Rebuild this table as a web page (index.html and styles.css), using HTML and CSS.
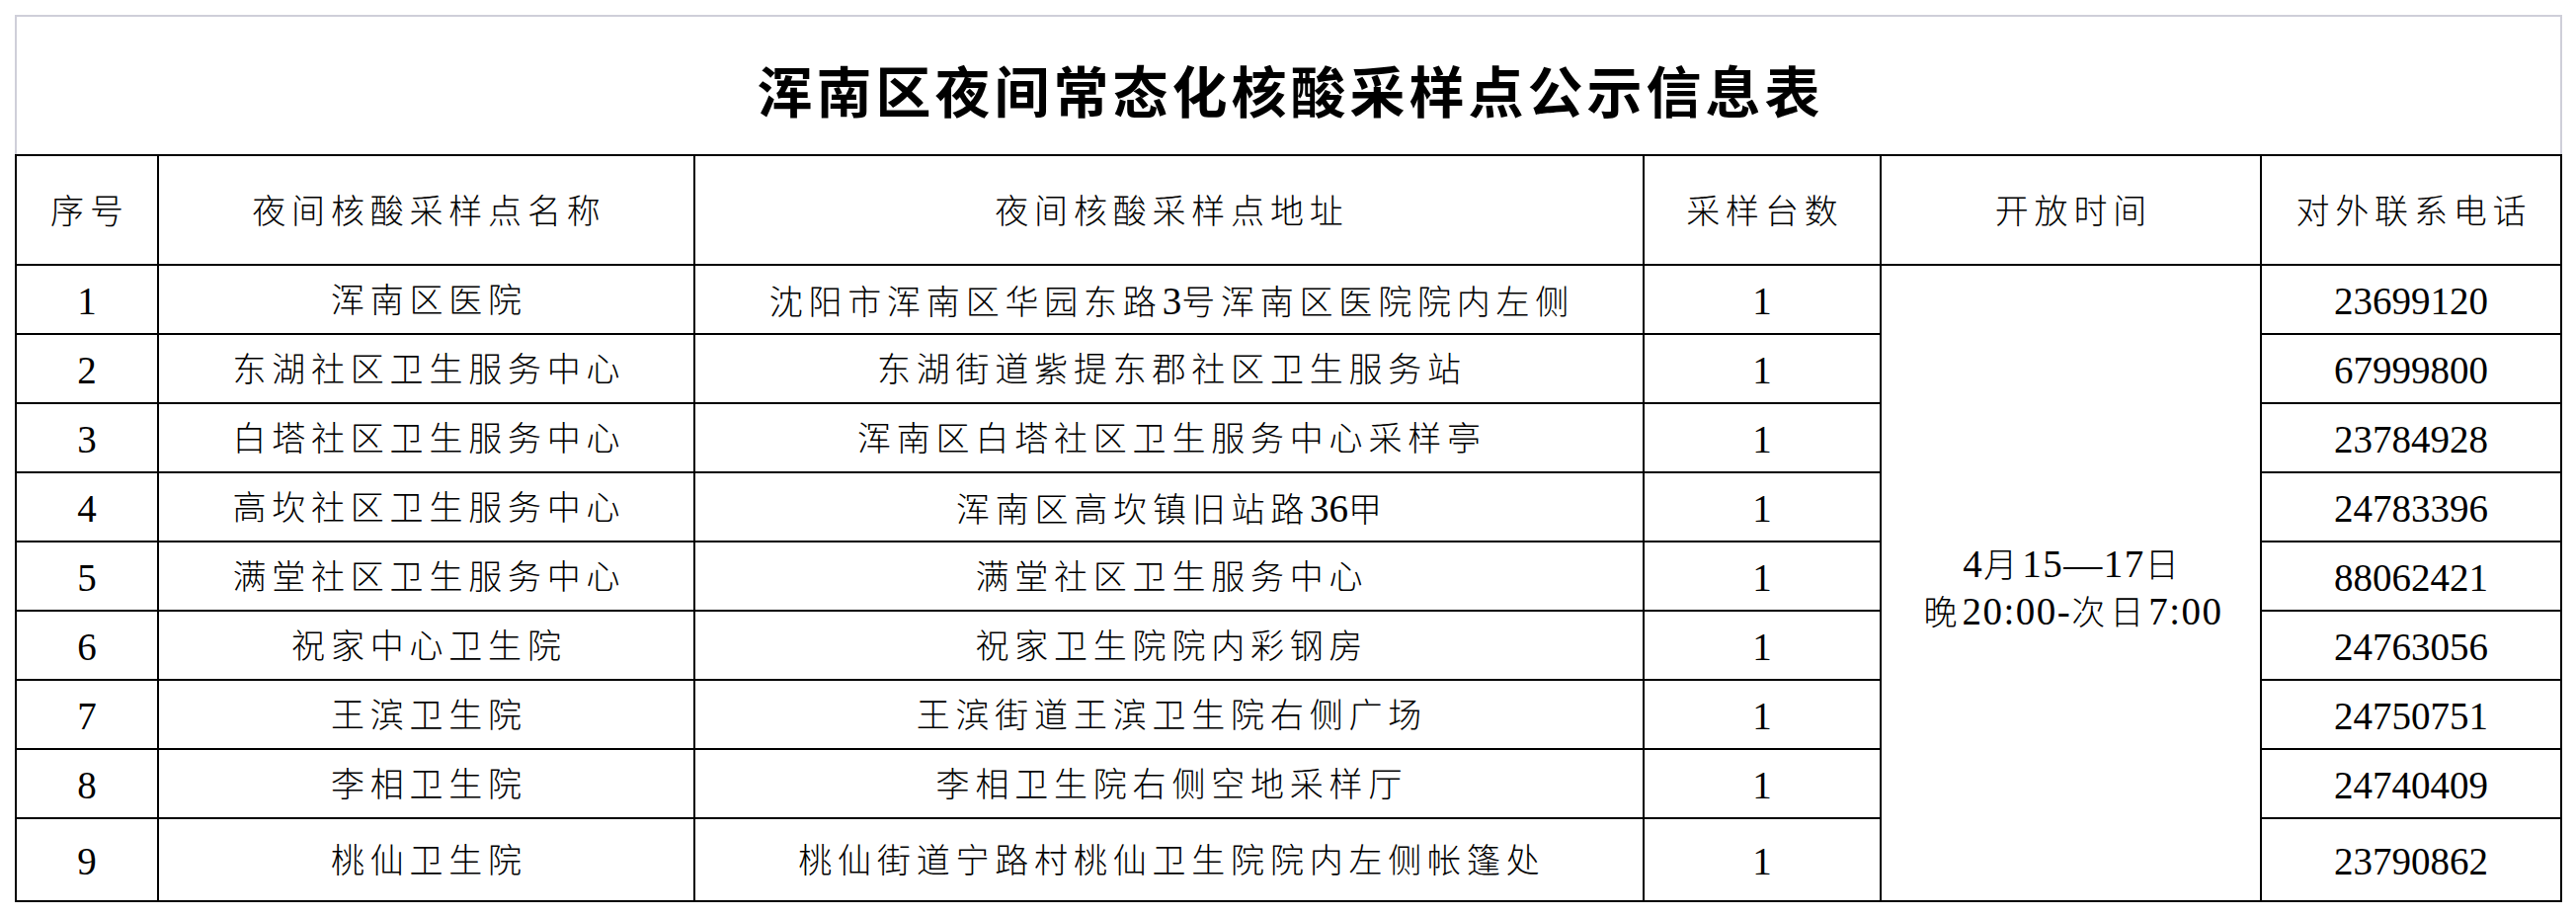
FILE: index.html
```html
<!DOCTYPE html>
<html lang="zh-CN">
<head>
<meta charset="utf-8">
<title>浑南区夜间常态化核酸采样点公示信息表</title>
<link rel="stylesheet" href="styles.css">
</head>
<body>
<div class="sheet">
  <div class="title-box">
    <h1 class="title">浑南区夜间常态化核酸采样点公示信息表</h1>
  </div>
  <table class="grid">
    <colgroup>
      <col class="c1"><col class="c2"><col class="c3"><col class="c4"><col class="c5"><col class="c6">
    </colgroup>
    <thead>
      <tr class="head">
        <th>序号</th>
        <th>夜间核酸采样点名称</th>
        <th>夜间核酸采样点地址</th>
        <th>采样台数</th>
        <th>开放时间</th>
        <th>对外联系电话</th>
      </tr>
    </thead>
    <tbody>
      <tr class="row">
        <td class="num">1</td>
        <td>浑南区医院</td>
        <td>沈阳市浑南区华园东路<span class="d">3</span>号浑南区医院院内左侧</td>
        <td class="num">1</td>
        <td class="time" rowspan="9"><span class="d">4</span>月<span class="d">15—17</span>日<br>晚<span class="d">20:00-</span>次日<span class="d">7:00</span></td>
        <td class="num">23699120</td>
      </tr>
      <tr class="row">
        <td class="num">2</td>
        <td>东湖社区卫生服务中心</td>
        <td>东湖街道紫提东郡社区卫生服务站</td>
        <td class="num">1</td>
        <td class="num">67999800</td>
      </tr>
      <tr class="row">
        <td class="num">3</td>
        <td>白塔社区卫生服务中心</td>
        <td>浑南区白塔社区卫生服务中心采样亭</td>
        <td class="num">1</td>
        <td class="num">23784928</td>
      </tr>
      <tr class="row">
        <td class="num">4</td>
        <td>高坎社区卫生服务中心</td>
        <td>浑南区高坎镇旧站路<span class="d">36</span>甲</td>
        <td class="num">1</td>
        <td class="num">24783396</td>
      </tr>
      <tr class="row">
        <td class="num">5</td>
        <td>满堂社区卫生服务中心</td>
        <td>满堂社区卫生服务中心</td>
        <td class="num">1</td>
        <td class="num">88062421</td>
      </tr>
      <tr class="row">
        <td class="num">6</td>
        <td>祝家中心卫生院</td>
        <td>祝家卫生院院内彩钢房</td>
        <td class="num">1</td>
        <td class="num">24763056</td>
      </tr>
      <tr class="row">
        <td class="num">7</td>
        <td>王滨卫生院</td>
        <td>王滨街道王滨卫生院右侧广场</td>
        <td class="num">1</td>
        <td class="num">24750751</td>
      </tr>
      <tr class="row">
        <td class="num">8</td>
        <td>李相卫生院</td>
        <td>李相卫生院右侧空地采样厅</td>
        <td class="num">1</td>
        <td class="num">24740409</td>
      </tr>
      <tr class="row last">
        <td class="num">9</td>
        <td>桃仙卫生院</td>
        <td>桃仙街道宁路村桃仙卫生院院内左侧帐篷处</td>
        <td class="num">1</td>
        <td class="num">23790862</td>
      </tr>
    </tbody>
  </table>
</div>
</body>
</html>
```
FILE: styles.css
```css
html, body {
  margin: 0;
  padding: 0;
  background: #ffffff;
}

.sheet {
  padding: 15px 0 0 15px;
  width: 2579px;
}

.title-box {
  box-sizing: border-box;
  height: 141px;
  border: 2px solid #cfcfd9;
  border-bottom: none;
  display: flex;
  align-items: center;
  justify-content: center;
  padding-top: 6px;
}

.title {
  margin: 0;
  font-family: "Noto Sans CJK SC", sans-serif;
  font-weight: 700;
  font-size: 56px;
  letter-spacing: 4px;
  padding-left: 4px;
  line-height: 1;
  color: #000;
}

.grid {
  width: 2579px;
  border-collapse: collapse;
  table-layout: fixed;
  font-family: "Liberation Serif", "Noto Sans CJK SC", serif;
  color: #000;
}

.c1 { width: 144px; }
.c2 { width: 543px; }
.c3 { width: 961px; }
.c4 { width: 240px; }
.c5 { width: 385px; }
.c6 { width: 304px; }

.grid th,
.grid td {
  border: 2px solid #000;
  padding: 0 0 0 5.8px;
  text-align: center;
  vertical-align: middle;
  font-size: 34px;
  font-weight: 300;
  letter-spacing: 5.8px;
  white-space: nowrap;
  line-height: 1.2;
}

.grid td {
  padding-top: 5px;
}

.head { height: 111px; }
.head th { padding-top: 6px; }
.row { height: 70px; }
.row.last { height: 84px; }

.grid td.num {
  font-size: 39px;
  font-weight: 400;
  letter-spacing: 0;
  padding-left: 0;
}

.d {
  font-size: 39px;
  font-weight: 400;
  letter-spacing: 0;
}

.grid td.time {
  line-height: 46px;
  letter-spacing: 5px;
  padding-left: 5px;
  padding-top: 12px;
}

.time .d {
  letter-spacing: 1.5px;
}
```
